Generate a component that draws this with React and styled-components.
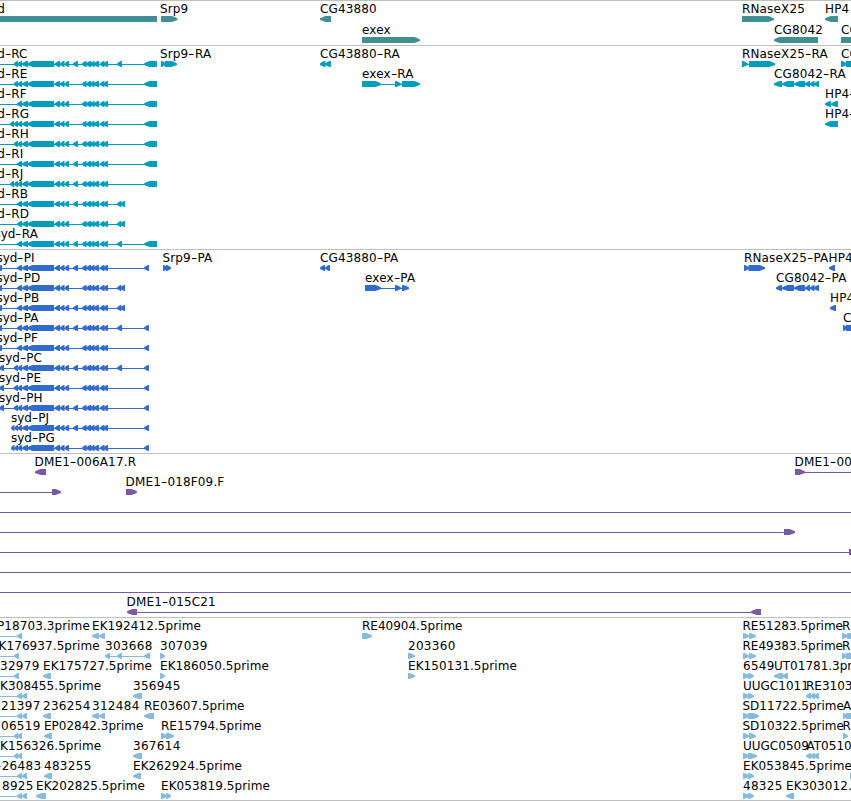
/*
    Genome browser view. Every track is a stack of rows, and every row holds the features
    placed at their position on the sequence. A feature is a label with its exons under it.
*/
import React from 'react';
import styled, { createGlobalStyle } from 'styled-components';

const GlobalStyle = createGlobalStyle`
body{
    margin: 0;
    background-color: #ffffff;
    overflow: hidden;
}
`
const Browser = styled.div`
    display: flex;
    flex-direction: column;
    width: 851px;
    height: 800px;
    border-bottom: 1px solid #bfbfbf;
    overflow: hidden;
    color: #000000;
    font-family: "DejaVu Sans", sans-serif;
    font-size: 12px;
`
const TrackPanel = styled.section`
    border-top: 1px solid #bfbfbf;
    padding-bottom: ${props => props.$gap}px;
    color: ${props => props.$color};
`
const TrackRow = styled.div`
    position: relative;
    height: ${props => props.$height}px;
`
const Label = styled.span`
    position: absolute;
    top: 1px;
    left: ${props => props.$x}px;
    line-height: 15px;
    letter-spacing: ${props => props.$spacing}px;
    white-space: pre;
    color: #000000;
`
const Dash = styled.span`
    display: inline-block;
    margin: 0 1px;
    transform: scaleX(1.45);
`
const Glyphs = styled.svg`
    display: block;
    position: relative;
    top: 15px;
    width: 851px;
    height: 6px;
    fill: currentColor;
`

// exons shared by all the syd transcripts
const body = [[22, 28], [27, 54], [54.5, 60], [60, 64.5], [64.5, 69]];
const middle = [[82, 86.5], [86, 91], [90, 94.5], [93.5, 99], [100, 104.5], [103.5, 108]];
const starts = {
    a: [[13.7, 18], [17.5, 22]],
    b: [[17, 22]],
    c: [[10, 14], [14, 18], [17.5, 22]],
    j: [[11, 14.5], [14.5, 18], [17.5, 22]],
};
const ends = {
    utr: [[144, 157]],
    utr2: [[117, 122], [144, 157]],
    pair: [[117, 121.5], [120.5, 125]],
    cds: [[144, 149]],
    cds2: [[117, 122], [144, 149]],
};

function syd(name, x, start, extra, end, tip) {
    const exons = [...starts[start], ...body, ...(extra ? [[73, 78]] : []), ...middle, ...ends[end]];
    if (tip) exons.unshift([tip - 5, tip]);
    return { name, x, dir: 'left', exons, from: start === 'j' ? 11 : -6 };
}
const left = (name, x, ...exons) => ({ name, x, dir: 'left', exons });
const right = (name, x, ...exons) => ({ name, x, dir: 'right', exons });
const line = (from, to) => ({ exons: [], from, to });

const tracks = [
    {
        id: 'gene', color: '#408f94', height: 21, gap: 2,
        rows: [
            [left('syd', -16, [-10, 157]), right('Srp9', 160, [161, 177.5]), left('CG43880', 320, [320, 331]),
                right('RNaseX25', 742, [742, 774]), left('HP4', 825, [825, 838])],
            [right('exex', 362, [362, 420]), left('CG8042', 774, [774, 818]), right('CG', 841, [841, 870])],
        ],
    },
    {
        id: 'transcript', color: '#009dbf', height: 20, gap: 3,
        rows: [
            [syd('syd-RC', -16, 'a', true, 'utr2'), right('Srp9-RA', 160, [161, 166], [165, 177]),
                left('CG43880-RA', 320, [320, 325.5], [325, 331]), right('RNaseX25-RA', 742, [742, 748], [749, 775]),
                right('CG', 841, [841, 847], [846, 870])],
            [syd('syd-RE', -16, 'a', false, 'utr'), right('exex-RA', 362, [362, 381], [395, 401], [402, 420]),
                left('CG8042-RA', 774, [774, 782], [782, 794], [794, 805], [805, 810], [810, 814.5], [814, 819])],
            [syd('syd-RF', -16, 'b', false, 'utr'), left('HP4-RA', 825, [825, 831], [831, 838])],
            [syd('syd-RG', -16, 'c', false, 'utr'), left('HP4-RB', 825, [825, 838])],
            [syd('syd-RH', -16, 'a', true, 'utr')],
            [syd('syd-RI', -16, 'b', true, 'utr')],
            [syd('syd-RJ', -16, 'c', true, 'utr')],
            [syd('syd-RB', -16, 'b', true, 'pair')],
            [syd('syd-RD', -16, 'b', false, 'pair')],
            [syd('syd-RA', -5.5, 'b', true, 'utr2')],
        ],
    },
    {
        id: 'polypeptide', color: '#306bcf', height: 20, gap: 3,
        rows: [
            [syd('syd-PI', -3.5, 'b', true, 'cds', 2), right('Srp9-PA', 162.5, [163, 167.5], [166, 171]),
                left('CG43880-PA', 320, [320, 325], [325, 330]), right('RNaseX25-PA', 744, [744, 749], [748.5, 765]),
                left('HP4-PA', 828.5, [829, 835])],
            [syd('syd-PD', -3.5, 'b', false, 'pair', 2), right('exex-PA', 365, [365, 381], [395, 401], [402, 409]),
                left('CG8042-PA', 776, [776, 782], [782, 794], [794, 805], [805, 810], [810, 814.5], [814, 819])],
            [syd('syd-PB', -3.5, 'b', true, 'pair', 2), left('HP4-PB', 830, [830, 836])],
            [syd('syd-PA', -3.5, 'b', true, 'cds2', 2), right('CG', 843, [843, 847], [846, 870])],
            [syd('syd-PF', -3.5, 'b', false, 'cds', 2)],
            [syd('syd-PC', -1, 'a', true, 'cds2', 4)],
            [syd('syd-PE', -1, 'a', false, 'cds', 4)],
            [syd('syd-PH', -1, 'a', true, 'cds', 4)],
            [syd('syd-PJ', 11, 'j', true, 'cds')],
            [syd('syd-PG', 11, 'j', false, 'cds')],
        ],
    },
    {
        id: 'bac', color: '#7759a8', height: 20, gap: 3,
        rows: [
            [left('DME1-006A17.R', 34.5, [35, 46]), { ...right('DME1-001A01', 794.5, [795, 805]), to: 851 }],
            [{ ...right('', 0, [52, 61]), from: 0 }, right('DME1-018F09.F', 125.5, [126, 137])],
            [line(0, 851)],
            [{ ...right('', 0, [784, 795]), from: 0 }],
            [{ ...right('', 0, [849, 862]), from: 0 }],
            [line(0, 851)],
            [line(0, 851)],
            [left('DME1-015C21', 126.5, [127, 137], [751, 761])],
        ],
    },
    {
        id: 'est', color: '#85bbdd', height: 20, gap: 2,
        rows: [
            [{ ...left('P18703.3prime', -3, [17, 22]), from: 0 }, left('EK192412.5prime', 92, [92, 99], [99, 105]),
                right('RE40904.5prime', 362, [362, 372]), right('RE51283.5prime', 742.5, [743, 749], [749, 756]),
                right('R', 842, [842, 848], [847, 856])],
            [{ ...left('K176937.5prime', -1.5, [14, 19]), from: 0 }, left('303668', 105, [105, 110], [117, 122], [144, 150]),
                right('307039', 160, [160, 165]), right('203360', 408, [408, 415]),
                right('RE49383.5prime', 742.5, [743, 749], [749, 756]), right('R', 842, [842, 847], [846, 860])],
            [{ ...left('32979', 0, [14, 19]), from: 0 }, left('EK175727.5prime', 43, [43, 51]),
                right('EK186050.5prime', 160, [160, 165]), right('EK150131.5prime', 408, [408, 415]),
                right('6549', 743, [743, 749], [748, 754]), left('UT01781.3prime', 774, [774, 783], [782, 788])],
            [{ ...left('K308455.5prime', 0, [17, 22], [22, 27]), from: 0 }, left('356945', 133, [133, 142]),
                right('UUGC1011', 743, [743, 749], [748, 754]), left('RE31030.5prime', 806, [806, 811], [810, 815], [814, 819])],
            [{ ...left('21397', 1, [17, 22], [22, 27]), from: 0 }, left('236254', 43, [43, 51]),
                left('312484', 92, [92, 99], [99, 105]), left('RE03607.5prime', 144, [144, 154]),
                right('SD11722.5prime', 742.5, [743, 749], [748, 759]), right('A', 843, [843, 847], [846, 860])],
            [{ ...left('06519', 1, [14, 18], [17.5, 22]), from: 0 }, left('EP02842.3prime', 44, [44, 52]),
                right('RE15794.5prime', 161, [161, 167], [166, 174]), right('SD10322.5prime', 742.5, [743, 749], [749, 756]),
                right('R', 842.5, [843, 848])],
            [{ ...left('K156326.5prime', 0, [14, 18], [17.5, 22]), from: 0 }, left('367614', 133, [133, 142]),
                right('UUGC0509', 743, [743, 749], [748, 757]), left('AT05101.5prime', 806.5, [806, 811], [810, 815], [814, 819])],
            [{ ...left('-26483', -5, [17, 22], [22, 27]), from: 0 }, left('483255', 44, [44, 52]),
                left('EK262924.5prime', 133, [133, 141]), right('EK053845.5prime', 743, [743, 749], [748, 754]),
                right('', 0, [850, 860])],
            [{ ...left('8925', 2, [17, 22], [22, 27]), from: 0 }, left('EK202825.5prime', 36, [36, 46]),
                right('EK053819.5prime', 161, [161, 167], [166, 171]), right('48325', 743, [743, 749], [748, 754]),
                left('EK303012.5prime', 786, [786, 794])],
        ],
    },
];

// one exon, pointed in the direction of the strand
function exonPoints([x1, x2], dir) {
    const head = Math.min(7, x2 - x1);
    const tip = dir === 'left' ? x1 : x2;
    const back = dir === 'left' ? x2 : x1;
    const at = (part) => dir === 'left' ? tip + head * part : tip - head * part;
    return `${tip},2.5 ${at(0.4)},1 ${at(0.8)},0 ${back},0 ${back},6 ${at(0.8)},6 ${at(0.4)},5 ${tip},4`;
}

// digits run wider than mixed names
function labelSpacing(name) {
    if (/^-?\d+$/.test(name)) return 0.3;
    if (/^(E?K|P)\d/.test(name)) return 0.08;
    if (/prime$|^syd|^UUGC/.test(name)) return 0;
    return 0.15;
}

const FeatureGlyph = ({ feature }) => {
    const { exons, dir } = feature;
    const from = feature.from ?? exons[0][0];
    const to = feature.to ?? exons[exons.length - 1][1] - 2;
    const hasIntron = exons.length !== 1 || feature.from !== undefined || feature.to !== undefined;
    return (
        <g>
            {hasIntron && <rect x={from} y="3" width={to - from} height="1" />}
            {exons.map((exon, i) => <polygon key={i} points={exonPoints(exon, dir)} />)}
        </g>
    );
}

const FeatureLabel = ({ name, x }) => {
    const [start, end] = name.split('-');
    return (
        <Label $x={x} $spacing={labelSpacing(name)}>
            {start}{end && <><Dash>-</Dash>{end}</>}
        </Label>
    );
}

const Track = ({ track }) => (
    <TrackPanel $color={track.color} $gap={track.gap}>
        {track.rows.map((row, i) => (
            <TrackRow key={i} $height={track.height}>
                {row.filter(f => f.name).map(f => <FeatureLabel key={f.name + f.x} name={f.name} x={f.x} />)}
                <Glyphs viewBox="0 0 851 6">
                    {row.map((f, n) => <FeatureGlyph key={n} feature={f} />)}
                </Glyphs>
            </TrackRow>
        ))}
    </TrackPanel>
);

const App = () => {
    return (
        <>
            <GlobalStyle />
            <Browser>
                {tracks.map(track => <Track key={track.id} track={track} />)}
            </Browser>
        </>
    );
}

export default App;
